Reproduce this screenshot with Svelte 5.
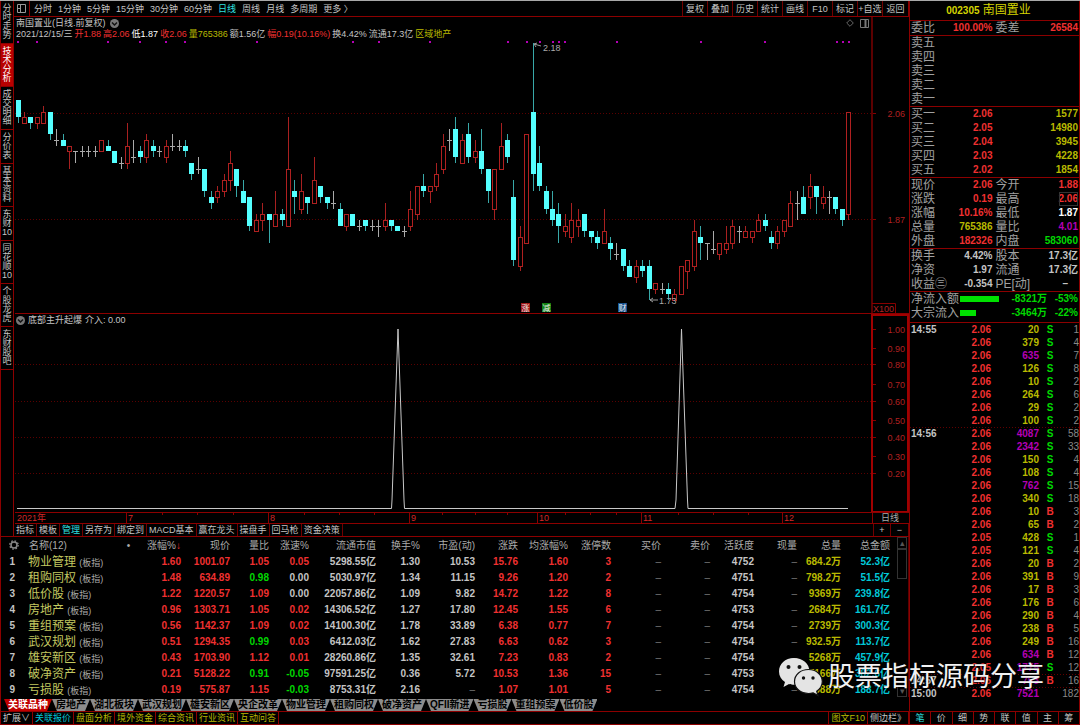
<script lang="ts">
    const sideTabs = ['分时走势', '技术分析', '成交明细', '分价表', '基本资料', '东财10', '同花顺10', '个股龙虎', '东财股吧'];
    const periods = ['分时', '1分钟', '5分钟', '15分钟', '30分钟', '60分钟', '日线', '周线', '月线', '多周期', '更多 〉'];
    const tools = ['复权', '叠加', '历史', '统计', '画线', 'F10', '标记', '+自选', '返回'];

    const info = [
        ['2021/12/15/三', 'grey'], ['开1.88', 'red'], ['高2.06', 'red'], ['低1.87', 'white'],
        ['收2.06', 'red'], ['量765386', 'yellow'], ['额1.56亿', 'grey'], ['幅0.19(10.16%)', 'red'],
        ['换4.42%', 'grey'], ['流通17.3亿', 'grey'], ['区域地产', 'yellow'],
    ];

    // open, high, low, close in cents
    const candles = [
        [208,208,204,205],[204,206,204,205],[205,205,203,204],[204,205,203,205],[204,207,204,206],
        [206,206,201,202],[201,203,200,201],[201,202,200,200],[199,200,196,200],[199,199,197,199],
        [199,200,198,199],[199,200,198,199],[199,200,198,199],[199,201,199,201],[200,201,199,199],
        [199,199,197,197],[197,198,196,197],[197,204,196,200],[198,201,197,198],[199,200,197,198],
        [198,202,197,201],[200,201,198,199],[199,200,198,199],[198,201,197,200],[200,202,199,200],
        [200,201,199,200],[200,201,198,199],[197,197,194,195],[196,198,195,196],[196,196,191,192],
        [191,192,189,190],[191,193,190,192],[192,195,191,194],[194,199,192,197],[196,196,191,193],
        [192,194,190,190],[191,191,185,186],[185,188,185,187],[187,190,185,188],[188,188,183,187],
        [186,192,186,188],[188,189,186,187],[186,205,186,196],[192,194,188,191],[189,195,188,192],
        [191,191,188,190],[190,198,190,194],[193,193,190,191],[191,191,189,190],[190,192,189,190],
        [189,190,186,186],[186,188,185,188],[188,188,186,186],[186,187,185,186],[187,187,185,186],
        [186,187,185,186],[186,187,184,186],[186,190,185,187],[187,187,185,186],[186,186,185,185],
        [185,186,184,185],[186,192,185,189],[188,193,187,193],[193,195,191,192],[192,193,190,193],
        [193,197,192,195],[196,202,195,200],[201,203,199,201],[203,205,197,198],[197,202,197,201],
        [202,204,197,198],[198,201,197,199],[199,203,195,196],[196,196,190,192],[189,196,187,196],
        [196,204,196,200],[201,202,197,198],[191,194,179,180],[179,186,178,184],[183,202,183,202],
        [206,218,192,195],[197,200,192,193],[192,193,188,189],[189,192,186,187],[188,190,183,186],
        [185,188,184,186],[184,190,183,187],[186,189,184,187],[188,188,184,185],[185,185,183,184],
        [184,185,182,183],[183,189,183,185],[183,184,180,182],[181,183,180,181],[182,182,178,179],
        [179,180,177,177],[177,180,176,179],[179,180,177,178],[179,180,173,175],[175,176,174,176],
        [175,176,174,175],[175,176,173,174],[173,175,173,174],[174,179,174,179],[178,180,175,180],
        [179,187,178,185],[184,186,180,183],[183,183,180,183],[182,185,181,182],[181,183,180,183],
        [182,186,181,183],[183,187,182,186],[185,186,183,185],[184,186,184,185],[184,185,183,185],
        [185,188,185,187],[187,188,185,186],[184,185,182,183],[183,186,182,185],[185,187,184,187],
        [186,192,186,190],[190,192,187,190],[191,193,188,188],[191,195,189,193],[193,193,188,191],
        [190,193,189,191],[191,192,188,191],[191,191,188,189],[189,189,186,187],[188,206,187,206],
    ];
    const cx = (i: number) => Math.round(17.5 + i * 6.44);
    const py = (p: number) => Math.round(111.5 + (206 - p) * 5.71);
    const kind = (c: number[]) => c[3] > c[0] ? 'up' : c[3] < c[0] ? 'down' : 'flat';

    const dots = [17, 36, 107, 139, 165, 184, 256, 352, 378, 429, 507, 526, 539, 552, 558, 564, 616, 700, 764, 836, 842, 848];
    const marks = [[521, '涨', '#a01818'], [542, '减', '#128012'], [618, '财', '#15508c']] as [number, string, string][];
    const scale = [['1.00', 329], ['0.90', 348], ['0.80', 364], ['0.70', 384], ['0.60', 401], ['0.50', 420], ['0.40', 437], ['0.30', 456], ['0.20', 473]] as [string, number][];
    const months = [['7', 127], ['8', 269], ['9', 410], ['10', 538], ['11', 642], ['12', 783]] as [string, number][];
    const ticksX = [162, 197, 233, 304, 339, 374, 442, 475, 507, 565, 590, 616, 678, 713, 748];

    const formulas = ['指标', '模板', '管理', '另存为', '绑定到', 'MACD基本', '赢在龙头', '操盘手', '回马枪', '资金决策'];

    const heads = ['涨幅%', '现价', '量比', '涨速%', '流通市值', '换手%', '市盈(动)', '涨跌', '均涨幅%', '涨停数', '买价', '卖价', '活跃度', '现量', '总量', '总金额'];
    const widths = [48, 49, 39, 40, 67, 44, 55, 43, 50, 43, 50, 49, 44, 43, 44, 49];
    const sectors = [
        ['物业管理', '1.60', '1001.07', '1.05', '0.05', '5298.55亿', '1.30', '10.53', '15.76', '1.60', '3', '–', '–', '4752', '–', '684.2万', '52.3亿'],
        ['租购同权', '1.48', '634.89', '0.98', '0.00', '5030.97亿', '1.34', '11.15', '9.26', '1.20', '2', '–', '–', '4751', '–', '798.2万', '51.5亿'],
        ['低价股', '1.22', '1220.57', '1.09', '0.00', '22057.86亿', '1.09', '9.82', '14.72', '1.22', '8', '–', '–', '4754', '–', '9369万', '239.8亿'],
        ['房地产', '0.96', '1303.71', '1.05', '0.02', '14306.52亿', '1.27', '17.80', '12.45', '1.55', '6', '–', '–', '4753', '–', '2684万', '161.7亿'],
        ['重组预案', '0.56', '1142.37', '1.09', '0.02', '14100.30亿', '1.78', '33.89', '6.38', '0.77', '7', '–', '–', '4754', '–', '2739万', '300.3亿'],
        ['武汉规划', '0.51', '1294.35', '0.99', '0.03', '6412.03亿', '1.62', '27.83', '6.63', '0.62', '3', '–', '–', '4754', '–', '932.5万', '113.7亿'],
        ['雄安新区', '0.43', '1703.90', '1.12', '0.01', '28260.86亿', '1.35', '32.61', '7.23', '0.83', '2', '–', '–', '4754', '–', '5268万', '457.9亿'],
        ['破净资产', '0.21', '5128.22', '0.91', '-0.05', '97591.25亿', '0.36', '5.72', '10.53', '1.36', '15', '–', '–', '4753', '–', '7166万', '382.6亿'],
        ['亏损股', '0.19', '575.87', '1.15', '-0.03', '8753.31亿', '2.16', '–', '1.07', '1.01', '5', '–', '–', '4754', '–', '2588万', '188.7亿'],
    ];

    function tone(col: number, v: string) {
        if (v === '–') return 'dim';
        if (col === 2) return +v < 1 ? 'green' : 'red';
        if (col === 3) return +v > 0 ? 'red' : +v < 0 ? 'green' : 'grey';
        if ([0, 1, 7, 8, 9].includes(col)) return 'red';
        if (col === 14) return 'yellow';
        if (col === 15) return 'cyan';
        return 'grey';
    }

    const cards = ['关联品种', '房地产', '湖北板块', '武汉规划', '雄安新区', '央企改革', '物业管理', '租购同权', '破净资产', 'QFII新进', '亏损股', '重组预案', '低价股'];
    const footer = ['扩展∨', '关联报价', '盘面分析', '境外资金', '综合资讯', '行业资讯', '互动问答'];

    const asks = ['卖五', '卖四', '卖三', '卖二', '卖一'];
    const bids = [['买一', '2.06', '1577'], ['买二', '2.05', '14980'], ['买三', '2.04', '3945'], ['买四', '2.03', '4228'], ['买五', '2.02', '1854']];
    const quotes = [
        ['现价', '2.06', 'red', '今开', '1.88', 'red'],
        ['涨跌', '0.19', 'red', '最高', '2.06', 'red boxed'],
        ['涨幅', '10.16%', 'red', '最低', '1.87', 'white'],
        ['总量', '765386', 'yellow', '量比', '4.01', 'magenta'],
        ['外盘', '182326', 'red', '内盘', '583060', 'green'],
    ];
    const basics = [
        ['换手', '4.42%', 'grey', '股本', '17.3亿', 'grey'],
        ['净资', '1.97', 'grey', '流通', '17.3亿', 'grey'],
        ['收益㊂', '-0.354', 'grey', 'PE[动]', '–', 'grey dash'],
    ];
    const flows = [['净流入额', 8321, '-53%'], ['大宗流入', 3464, '-22%']] as [string, number, string][];

    const deals = [
        ['14:55', '2.06', '20', 'S', '1'], ['', '2.06', '379', 'S', '4'], ['', '2.06', '635', 'S', '7'],
        ['', '2.06', '126', 'S', '8'], ['', '2.06', '10', 'S', '2'], ['', '2.06', '264', 'S', '6'],
        ['', '2.06', '29', 'S', '2'], ['', '2.06', '100', 'S', '2'], ['14:56', '2.06', '4087', 'S', '58'],
        ['', '2.06', '2342', 'S', '33'], ['', '2.06', '150', 'S', '4'], ['', '2.06', '108', 'S', '4'],
        ['', '2.06', '762', 'S', '15'], ['', '2.06', '340', 'S', '18'], ['', '2.06', '10', 'B', '3'],
        ['', '2.06', '65', 'B', '2'], ['', '2.05', '428', 'S', '1'], ['', '2.05', '121', 'S', '4'],
        ['', '2.06', '20', 'B', '2'], ['', '2.06', '391', 'B', '9'], ['', '2.06', '17', 'B', '3'],
        ['', '2.06', '176', 'B', '6'], ['', '2.06', '290', 'B', '4'], ['', '2.06', '238', 'B', '5'],
        ['', '2.06', '249', 'B', '16'], ['', '2.06', '634', 'B', '12'], ['', '2.05', '1775', 'S', '12'],
        ['14:57', '2.06', '763', 'B', '16'], ['15:00', '2.06', '7521', '', '182'],
    ];
    const panelTabs = ['笔', '价', '细', '势', '联', '值', '主', '筹'];

    let side = $state('技术分析');
    let period = $state('日线');
    let panel = $state('笔');
</script>

<div class="app">
    <div class="left">
        <div class="upper">
            <nav class="side">
                {#each sideTabs as t}
                    <button class:active={t === side} onclick={() => side = t}>
                        {#each t.match(/10|./g) ?? [] as ch}<span>{ch}</span>{/each}
                    </button>
                {/each}
            </nav>

            <main>
                <div class="toolbar">
                    <button class="fold" aria-label="折叠">
                        <svg width="9" height="9" viewBox="0 0 9 9"><path d="M.5 .5h8v8h-8zM3.500 .5v8M1 4.500h2" fill="none" stroke="#999" /></svg>
                    </button>
                    <div class="periods">
                        {#each periods as p}
                            <button class:active={p === period} onclick={() => period = p}>{p}</button>
                        {/each}
                    </div>
                    <div class="tools">
                        {#each tools as t}<button>{t}</button>{/each}
                    </div>
                </div>

                <section class="pane">
                    <svg viewBox="14 17 895 297">
                        <g class="grid">
                            <path d="M15 113.500H872M15 219.500H872" />
                        </g>
                        <path d="M872 17V314" stroke="#5c0000" stroke-width="2" />
                        <path d="M873 113.500h3M873 219.500h3" stroke="#800" />
                        {#each dots as x}<rect {x} y="41" width="2" height="2" fill="#b400b4" />{/each}
                        <g shape-rendering="crispEdges">
                            {#each candles as c, i}
                                {@const k = kind(c)}
                                {@const x = cx(i)}
                                {@const top = py(Math.max(c[0], c[3]))}
                                {@const bottom = py(Math.min(c[0], c[3]))}
                                {#if k === 'flat'}
                                    <rect class="flat" {x} y={py(c[1])} width="1" height={py(c[2]) - py(c[1])} />
                                    <rect class="flat" x={x - 2} y={top} width="5" height="1" />
                                {:else}
                                    <rect class="wick {k}" {x} y={py(c[1])} width="1" height={top - py(c[1])} />
                                    <rect class="wick {k}" {x} y={bottom} width="1" height={py(c[2]) - bottom} />
                                    {#if k === 'up'}
                                        <rect class="body up" x={x - 1.5} y={top + .5} width="4" height={bottom - top} />
                                    {:else}
                                        <rect class="body down" x={x - 2} y={top} width="5" height={bottom - top} />
                                    {/if}
                                {/if}
                            {/each}
                        </g>
                        <path d="M534 44l7 2M534 44l3-1M534 44l2 3" class="pointer" />
                        <text x="543" y="51" class="note">2.18</text>
                        <path d="M650 300h8M650 300l3-2M650 300l3 2" class="pointer" />
                        <text x="659" y="304" class="note">1.73</text>
                        {#each marks as [x, label, color]}
                            <rect {x} y="303" width="9" height="9" fill={color} />
                            <text x={x + 4.5} y="311" class="mark">{label}</text>
                        {/each}
                        <text x="905" y="117" class="scale">2.06</text>
                        <text x="905" y="223" class="scale">1.87</text>
                        <path d="M872 303.500h23.500v10" fill="none" stroke="#800" />
                        <text x="894" y="312" class="scale">X100</text>
                        <path d="M15 313.500H909" stroke="#8c0000" />
                    </svg>
                    <header>
                        <div class="title">
                            <h1>南国置业(日线.前复权)</h1>
                            <svg width="9" height="9" viewBox="0 0 9 9"><circle cx="4.5" cy="4.5" r="4.5" fill="#777" /><path d="M2 3.500l2.500 2.500 2.500-2.500" fill="none" stroke="#111" stroke-width="1.5" /></svg>
                            <span class="corner">
                                <svg width="8" height="8" viewBox="0 0 8 8"><path d="M4 .7L7.300 4 4 7.300 .7 4z" fill="none" stroke="#666" /></svg>
                                <svg width="9" height="9" viewBox="0 0 9 9"><path d="M.5 .5h8v8h-8z" fill="none" stroke="#777" /><path d="M5.500 1v7" stroke="#777" stroke-width="2" /></svg>
                            </span>
                        </div>
                        <p>
                            {#each info as [text, color]}<span class={color}>{text}</span>{/each}
                        </p>
                    </header>
                </section>

                <section class="pane">
                    <svg viewBox="14 314 895 210">
                        <g class="grid">
                            <path d="M15 364.500H872M15 401.500H872M15 437.500H872M15 473.500H872" />
                        </g>
                        <path d="M17 508.500H391.500L392 500 398 329 404 500 404.500 508.500H675L676 500 681.500 329 687.500 500 688 508.500H848" class="signal" />
                        <rect x="872" y="315" width="36" height="197" fill="none" stroke="#a00000" stroke-width="2" />
                        {#each scale as [label, y]}
                            <text x="905" y={y + 4} class="scale">{label}</text>
                            <path d="M873 {y}.5h3" stroke="#800" />
                        {/each}
                        <path d="M15 512.500H909M15 523.500H909M872.500 512V524" stroke="#8c0000" />
                        <text x="17" y="521" class="month">2021年</text>
                        {#each months as [label, x]}
                            <path d="M{x - .5} 512V524" stroke="#8c0000" />
                            <text x={x + 1} y="521" class="month">{label}</text>
                        {/each}
                        {#each ticksX as x}<path d="M{x}.5 512v3" stroke="#8c0000" />{/each}
                        <text x="881" y="521" class="note">日线</text>
                    </svg>
                    <header class="title sub">
                        <svg width="9" height="9" viewBox="0 0 9 9"><circle cx="4.5" cy="4.5" r="4.5" fill="#777" /><path d="M2 3.500l2.500 2.500 2.500-2.500" fill="none" stroke="#111" stroke-width="1.500" /></svg>
                        <span>底部主升起爆</span>
                        <span>介入: 0.00</span>
                    </header>
                </section>

                <div class="formulas">
                    {#each formulas as f}<button class:active={f === '管理'}>{f}</button>{/each}
                    <button class="zoom first">+</button>
                    <button class="zoom">−</button>
                </div>
            </main>
        </div>

        <div class="list">
            <table>
                <colgroup>
                    <col class="no" />
                    <col />
                    {#each widths as w}<col style:width="{w}px" />{/each}
                </colgroup>
                <thead>
                    <tr>
                        <th class="gear">
                            <svg width="10" height="10" viewBox="0 0 10 10"><circle cx="5" cy="5" r="3" fill="none" stroke="#888" stroke-width="1.500" /><circle cx="5" cy="5" r="4.200" fill="none" stroke="#888" stroke-width="1.300" stroke-dasharray="1.600 1.700" /></svg>
                        </th>
                        <th class="name"><span>名称(12)</span><i>•</i></th>
                        {#each heads as h, i}<th>{h}{#if i === 0}<b class="red">↓</b>{/if}</th>{/each}
                    </tr>
                </thead>
                <tbody>
                    {#each sectors as [name, ...cells], n}
                        <tr>
                            <td class="no">{n + 1}</td>
                            <td class="name">{name} <small>(板指)</small></td>
                            {#each cells as v, i}<td class={tone(i, v)}>{v}</td>{/each}
                        </tr>
                    {/each}
                </tbody>
            </table>
            <div class="scrollbar">
                <button aria-label="上">▴</button>
                <div class="thumb"></div>
                <button aria-label="下">▾</button>
            </div>
        </div>

        <div class="cards">
            {#each cards as c, i}<button class:active={i === 0}>{c}</button>{/each}
        </div>

        <footer>
            {#each footer as f, i}<button class={i === 0 ? 'grey' : i === 1 ? 'cyan' : 'yellow'}>{f}</button>{/each}
            <button class="yellow push">图文F10</button>
            <button class="grey">侧边栏》</button>
        </footer>
    </div>

    <aside>
        <h2><b>002305</b> 南国置业</h2>
        <dl>
            <div class="row"><dt>委比</dt><dd class="red">100.00%</dd><dt>委差</dt><dd class="red">26584</dd></div>
        </dl>
        <dl>
            {#each asks as a}<div class="row"><dt>{a}</dt></div>{/each}
        </dl>
        <dl>
            {#each bids as [label, price, vol]}
                <div class="row"><dt>{label}</dt><dd class="red">{price}</dd><dd class="wide yellow">{vol}</dd></div>
            {/each}
        </dl>
        {#each [quotes, basics] as block}
            <dl>
                {#each block as [a, av, ac, b, bv, bc]}
                    <div class="row"><dt>{a}</dt><dd class={ac}>{av}</dd><dt>{b}</dt><dd><span class={bc}>{bv}</span></dd></div>
                {/each}
            </dl>
        {/each}
        <dl class="flows">
            {#each flows as [label, amount, pct]}
                <div class="flow green">
                    <dt>{label}</dt>
                    <dd><span class="bar" style:width="{amount / 83.21}%"></span></dd>
                    <dd>-{amount}万</dd>
                    <dd>{pct}</dd>
                </div>
            {/each}
        </dl>

        <table class="deals">
            <tbody>
                {#each deals as [time, price, vol, side, n], i}
                    <tr class:minute={time && i > 0}>
                        <td class="time">{time}</td>
                        <td class="price red">{price}</td>
                        <td class="price {+vol > 500 ? 'magenta' : 'yellow'}">{vol}</td>
                        <td class="bs {side === 'S' ? 'green' : 'red'}">{side}</td>
                        <td class="count">{n}</td>
                    </tr>
                {/each}
            </tbody>
        </table>

        <nav class="panels">
            {#each panelTabs as t}<button class:active={t === panel} onclick={() => panel = t}>{t}</button>{/each}
        </nav>
    </aside>

    <div class="watermark">
        <svg width="46" height="40" viewBox="0 0 46 40">
            <path d="M16 1C7 1 1 7 1 14.500c0 4.500 2.300 8 6 10.500l-1.500 5 5.500-3c2 .6 3.500 .8 5 .8 8.500 0 15.500-5.500 15.500-13.300S24.500 1 16 1z" fill="#e4e4e4" />
            <path d="M30.500 12.500c-8 0-14 5.200-14 12s6 12 14 12c1.700 0 3.300-.3 4.700-.7l4.800 2.700-1.300-4.300c3.400-2.300 5.600-5.700 5.600-9.700 0-6.800-6.200-12-13.800-12z" fill="#e4e4e4" stroke="#111" stroke-width="1.200" />
            <g fill="#111"><circle cx="10.500" cy="10" r="2" /><circle cx="21.500" cy="10" r="2" /><circle cx="25.500" cy="21" r="1.700" /><circle cx="35" cy="21" r="1.700" /></g>
        </svg>
        <span>股票指标源码分享</span>
    </div>
</div>

<style>
    :global(body) {
        background: #000;
    }

    .app {
        --line: #8c0000;
        --red: #f03030;
        --grey: #c4c4c4;
        position: relative;
        display: grid;
        grid-template-columns: minmax(0, 1fr) 171px;
        min-height: 100vh;
        box-sizing: border-box;
        border-top: 1px solid #a8a8a8;
        background: #000;
        color: var(--grey);
        font: 9px/12px "Liberation Sans", "Noto Sans CJK SC", sans-serif;
        white-space: nowrap;
    }

    h1, h2, p, dl, dt, dd {
        margin: 0;
        font-size: inherit;
        font-weight: normal;
    }

    button {
        padding: 0;
        border: 0;
        background: none;
        color: inherit;
        font: inherit;
        cursor: pointer;
    }

    svg {
        display: block;
        flex: none;
    }

    .red { color: var(--red); }
    .green { color: #00d800; }
    .yellow { color: #b9b900; }
    .magenta { color: #b400b4; }
    .cyan { color: #00c8d8; }
    .white { color: #fff; }
    .grey { color: var(--grey); }
    .dim { color: #777; }

    .left {
        display: flex;
        flex-direction: column;
        border-left: 1px solid var(--line);
    }

    .upper {
        display: grid;
        grid-template-columns: 13px minmax(0, 1fr);
        border-bottom: 1px solid var(--line);
    }

    .side {
        display: flex;
        flex-direction: column;
        border-right: 1px solid var(--line);
    }

    .side button {
        display: flex;
        flex-direction: column;
        align-items: center;
        padding: 3px 0;
        border-bottom: 1px solid var(--line);
        line-height: 9px;
    }

    .side button.active {
        background: #b80000;
        color: #fff;
    }

    .toolbar {
        display: flex;
        height: 15px;
        border-bottom: 1px solid var(--line);
    }

    .fold {
        display: flex;
        align-items: center;
        justify-content: center;
        width: 16px;
        border-right: 1px solid var(--line);
    }

    .periods {
        display: flex;
        flex: 1;
        gap: 6px;
        padding-left: 4px;
    }

    .active {
        color: #2fe0e0;
    }

    .tools {
        display: flex;
    }

    .tools button {
        width: 25px;
        border-left: 1px solid #700000;
    }

    .tools button:last-child {
        width: 27px;
        border-right: 1px solid var(--line);
    }

    .pane {
        display: grid;
    }

    .pane > * {
        grid-area: 1 / 1;
    }

    .pane > svg {
        width: 100%;
        height: auto;
    }

    .pane header {
        align-self: start;
    }

    .title {
        display: flex;
        align-items: center;
        gap: 4px;
        padding-left: 2px;
    }

    .title.sub {
        gap: 3px;
    }

    .corner {
        display: flex;
        gap: 6px;
        margin-left: auto;
        padding-right: 40px;
    }

    .pane p {
        display: flex;
        gap: 2px;
        padding-left: 2px;
        line-height: 10px;
    }

    .grid path {
        stroke: #5a0000;
        stroke-dasharray: 1 2;
        fill: none;
    }

    .flat { fill: #aaa; }
    .wick.up { fill: #a82020; }
    .wick.down { fill: #38a8a8; }
    .body.up { fill: #000; stroke: #b02020; }
    .body.down { fill: #54ffff; }

    .pointer, .signal {
        fill: none;
        stroke: #999;
    }

    .signal { stroke: #c8c8c8; }
    .note { fill: #aaa; }
    .scale { fill: #b02020; text-anchor: end; }
    .month { fill: #d02828; }
    .mark { fill: #eee; font-size: 8px; text-anchor: middle; }

    .formulas {
        display: flex;
        height: 12px;
    }

    .formulas button {
        padding: 0 2px;
        border-right: 1px solid #700000;
    }

    .formulas .zoom {
        width: 18px;
    }

    .formulas .first {
        margin-left: auto;
        border-left: 1px solid #700000;
    }

    .list {
        display: grid;
        grid-template-columns: minmax(0, 1fr) 10px;
        gap: 7px;
        padding-right: 1px;
        border-right: 1px solid #5c0000;
    }

    table {
        width: 100%;
        border-collapse: collapse;
        table-layout: fixed;
    }

    .list col.no {
        width: 26px;
    }

    .list th, .list td {
        height: 16px;
        padding: 0;
        font-size: 10px;
        line-height: 15px;
        text-align: right;
    }

    .list th {
        font-weight: normal;
        color: #aaa;
    }

    .list td {
        font-weight: bold;
    }

    .list .gear {
        padding-left: 8px;
    }

    .list td.no {
        padding-right: 12px;
    }

    .list td.name {
        height: 15px;
        padding: 1px 0 0 1px;
        color: #c3c860;
        font-size: 12px;
        font-weight: normal;
        line-height: 14px;
        text-align: left;
    }

    .list th.name {
        padding-left: 2px;
        text-align: left;
    }

    th.name i {
        margin-left: 60px;
        font-style: normal;
    }

    small {
        color: #aaa;
        font-size: 9px;
        line-height: 1px;
    }

    .list td.dim {
        font-weight: normal;
    }

    .scrollbar {
        display: flex;
        flex-direction: column;
        color: #555;
    }

    .scrollbar button, .thumb {
        height: 12px;
        border: 1px solid #333;
        line-height: 9px;
    }

    .thumb {
        height: 28px;
        margin-bottom: auto;
    }

    .cards {
        display: flex;
        margin-top: 2px;
        padding-left: 3px;
        border-bottom: 1px solid var(--line);
    }

    .cards button {
        height: 12px;
        padding: 0 4px;
        background: #8c8c8c;
        clip-path: polygon(0 0, 100% 0, calc(100% - 5px) 100%, 5px 100%);
        color: #000;
        font-size: 10px;
        font-weight: bold;
        line-height: 12px;
    }

    .cards button.active {
        background: #c00000;
        color: #fff;
    }

    footer {
        display: flex;
        border-bottom: 1px solid var(--line);
    }

    footer button {
        padding: 0 2px;
        border-right: 1px solid var(--line);
    }

    footer .push {
        margin-left: auto;
        border-left: 1px solid var(--line);
    }

    aside {
        display: flex;
        flex-direction: column;
        border-left: 1px solid var(--line);
        border-right: 1px solid var(--line);
        border-bottom: 1px solid var(--line);
        font-size: 10px;
    }

    h2 {
        padding-right: 12px;
        color: #d4d400;
        font-size: 12px;
        line-height: 19px;
        text-align: center;
    }

    h2 b {
        font-size: 10px;
    }

    dl {
        padding: 0 1px;
        border-top: 1px solid var(--line);
    }

    .flows {
        padding-bottom: 2px;
        border-bottom: 1px solid var(--line);
    }

    .row, .flow {
        display: grid;
        grid-template-columns: 4fr 4fr 3fr 5fr;
        line-height: 14px;
    }

    dt {
        color: #a0a0a0;
        font-size: 12px;
        font-weight: normal;
    }

    .row dt:nth-child(3) {
        min-width: 0;
        padding-left: 1px;
    }

    dd {
        display: flex;
        align-items: center;
        justify-content: flex-end;
        min-width: 0;
        font-weight: bold;
    }

    .row dd:nth-child(2) {
        padding-right: 2px;
    }

    .wide {
        grid-column: 3 / -1;
    }

    .boxed {
        outline: 1px solid #333;
        outline-offset: -1px;
    }

    .dash {
        padding-right: 10px;
    }

    .flow {
        grid-template-columns: 49px 1fr 48px 31px;
    }

    .flow dd:nth-child(2) {
        justify-content: flex-start;
    }

    .bar {
        height: 6px;
        background: #00e000;
    }

    .deals {
        font-weight: bold;
    }

    .deals td {
        box-sizing: border-box;
        height: 13px;
        padding: 0;
        line-height: 12px;
        text-align: right;
    }

    .deals .time {
        width: 33px;
        padding-left: 1px;
        color: var(--grey);
        text-align: left;
    }

    .deals .price {
        width: 48px;
    }

    .deals .bs {
        width: 22px;
        text-align: center;
    }

    .deals .count {
        color: #888;
        font-weight: normal;
    }

    .minute {
        background: repeating-linear-gradient(90deg, #600000 0 1px, transparent 1px 3px) top / 100% 1px no-repeat;
    }

    .panels {
        display: flex;
        margin-top: auto;
        border-top: 1px solid var(--line);
        font-size: 9px;
    }

    .panels button {
        flex: 1;
        border-right: 1px solid var(--line);
    }

    .panels button:last-child {
        border-right: 0;
    }

    .watermark {
        position: absolute;
        right: 36px;
        bottom: 28px;
        display: flex;
        align-items: center;
        gap: 4px;
        color: #f2f2f2;
        font-size: 27px;
        line-height: 40px;
        text-shadow: 0 0 2px #000;
        pointer-events: none;
    }
</style>
